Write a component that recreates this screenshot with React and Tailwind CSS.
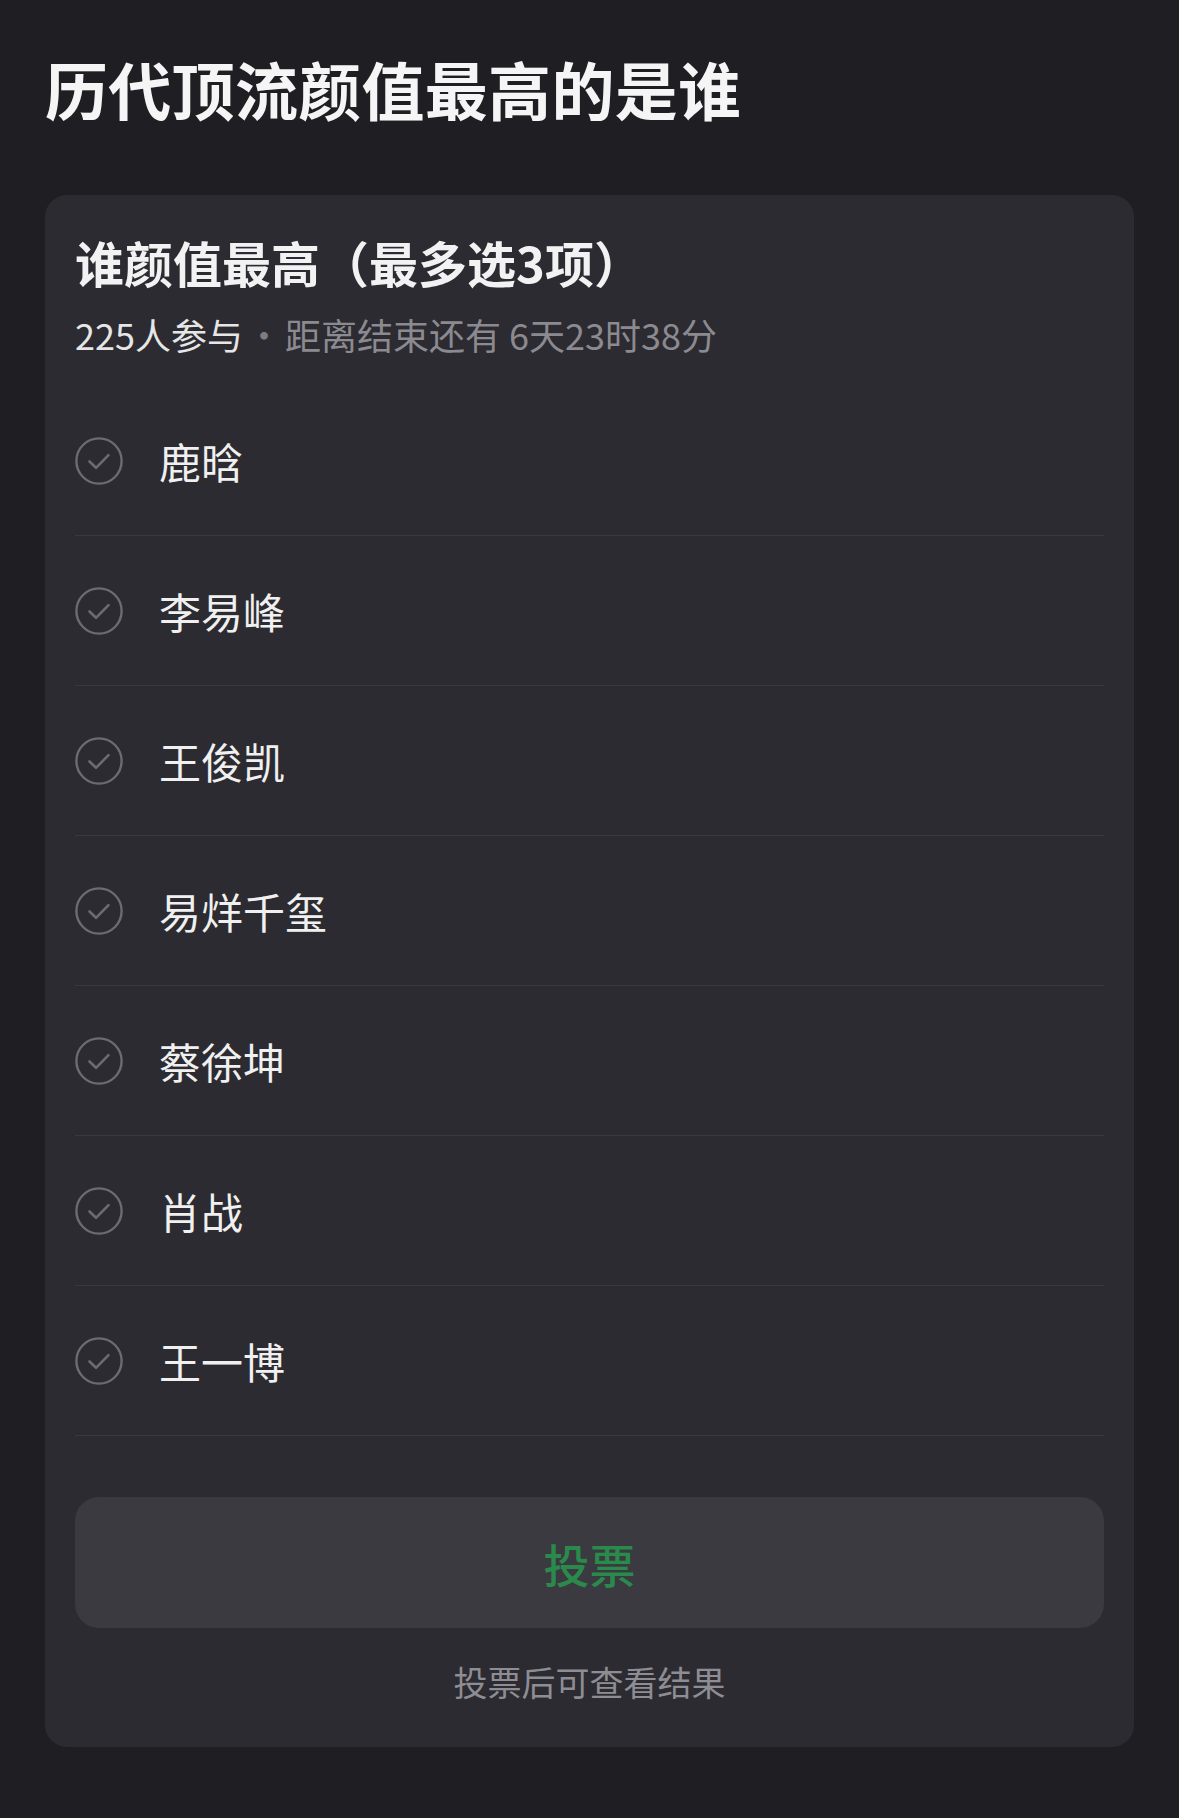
import React from "react";

const FONT = { fontFamily: '"Noto Sans CJK SC", "Noto Sans", sans-serif' };

const names = ["鹿晗", "李易峰", "王俊凯", "易烊千玺", "蔡徐坤", "肖战", "王一博"];

function CheckCircle() {
  return (
    <svg width="48" height="48" viewBox="0 0 48 48" fill="none" className="shrink-0">
      <circle cx="24" cy="24" r="22.6" stroke="#6c6b71" strokeWidth="2.4" />
      <path d="M14.5 24.5 L21 30.8 L33.5 18.2" stroke="#6c6b71" strokeWidth="2.6" strokeLinecap="round" strokeLinejoin="round" />
    </svg>
  );
}

export default function App() {
  return (
    <div className="min-h-[1818px] w-full bg-[#1f1e23] px-[45px] pt-[56px] pb-[71px]" style={FONT}>
      <h1 className="text-[63px] leading-none font-bold text-[#f5f5f5] tracking-[0.3px]">历代顶流颜值最高的是谁</h1>
      <div className="mt-[76px] rounded-[22px] bg-[#2c2b31] px-[30px] pt-[42px] pb-[48px]">
        <h2 className="text-[49px] leading-none font-bold text-[#f2f2f2]">谁颜值最高（最多选3项）</h2>
        <div className="mt-[30px] flex items-center text-[36px] leading-none">
          <span className="text-[#e6e6e6]">225人参与</span>
          <span className="mx-[3px] text-[#7d7c82]">·</span>
          <span className="text-[#8b8a90]">距离结束还有 6天23时38分</span>
        </div>
        <div className="mt-[34px] flex flex-col">
          {names.map((n) => (
            <div key={n} className="flex h-[150px] items-center gap-[36px] border-b-[1.5px] border-[#3a393f]">
              <CheckCircle />
              <span className="text-[42px] leading-none text-[#f0f0f0]">{n}</span>
            </div>
          ))}
        </div>
        <button className="mt-[61px] flex h-[131px] w-full items-center justify-center rounded-[24px] bg-[#3b3a40]">
          <span className="text-[46px] leading-none font-medium text-[#2a8a4c]" style={FONT}>投票</span>
        </button>
        <div className="mt-[37px] text-center text-[34px] leading-none text-[#8e8d93]">投票后可查看结果</div>
      </div>
    </div>
  );
}
